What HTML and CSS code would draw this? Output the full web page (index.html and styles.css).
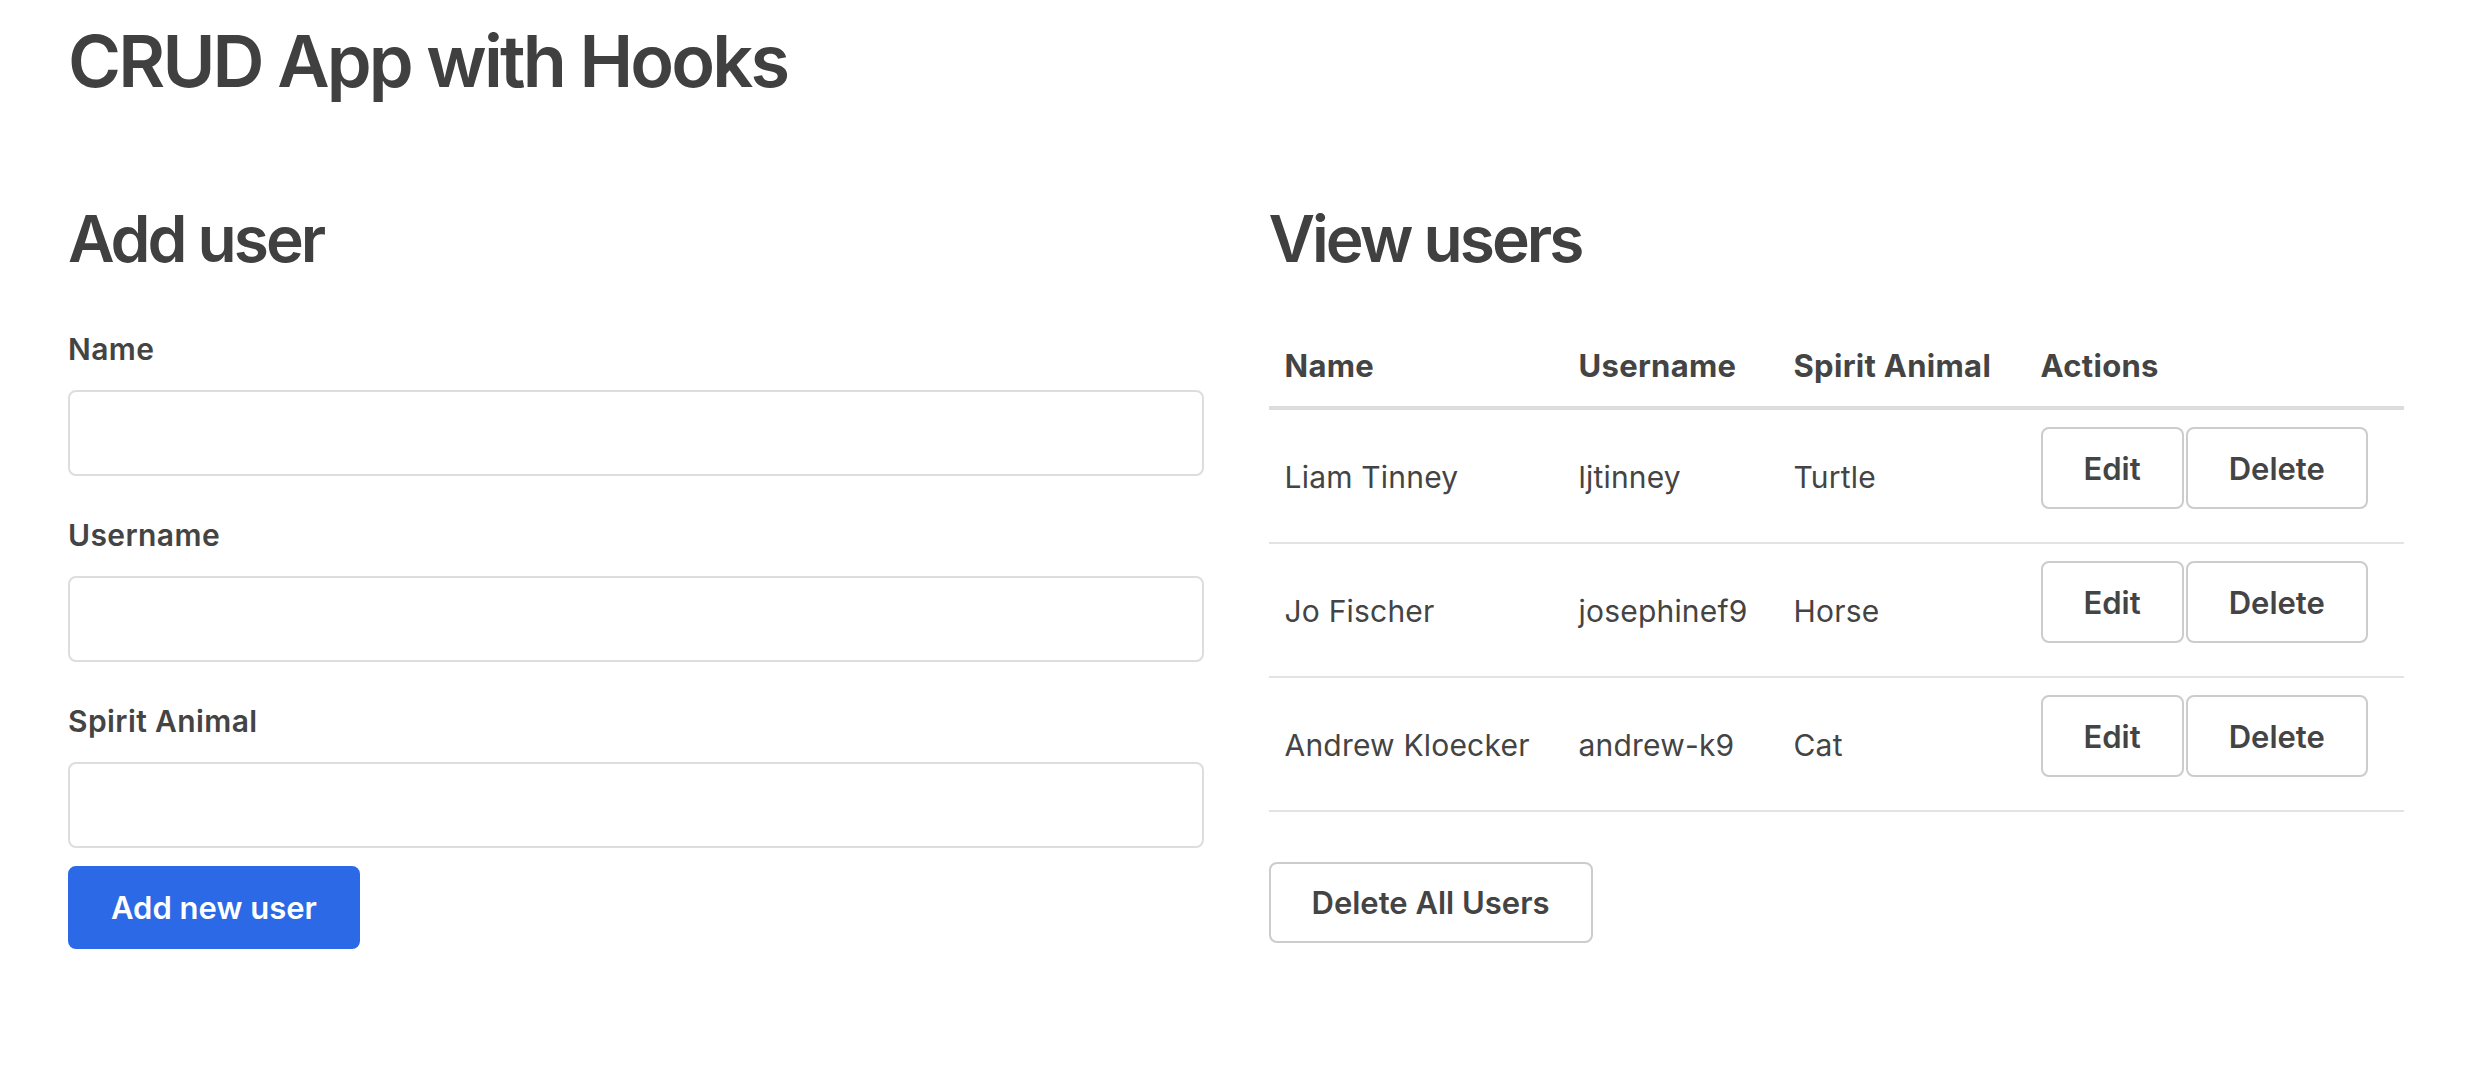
FILE: index.html
```html
<!DOCTYPE html>
<html lang="en">
<head>
<meta charset="utf-8">
<title>CRUD App with Hooks</title>
<link rel="stylesheet" href="styles.css">
</head>
<body>
<div class="page">
  <h1 class="title">CRUD App with Hooks</h1>
  <div class="columns">
    <section class="col">
      <h2 class="heading">Add user</h2>
      <form class="form">
        <label class="label">Name</label>
        <input class="input" type="text" name="name">
        <label class="label">Username</label>
        <input class="input" type="text" name="username">
        <label class="label">Spirit Animal</label>
        <input class="input input-last" type="text" name="animal">
        <button class="btn btn-primary" type="button">Add new user</button>
      </form>
    </section>
    <section class="col">
      <h2 class="heading">View users</h2>
      <table class="table">
        <thead>
          <tr>
            <th class="c-name">Name</th>
            <th class="c-user">Username</th>
            <th class="c-animal">Spirit Animal</th>
            <th class="c-actions">Actions</th>
          </tr>
        </thead>
        <tbody>
          <tr>
            <td>Liam Tinney</td>
            <td>ljtinney</td>
            <td>Turtle</td>
            <td class="actions"><button class="btn btn-small" type="button">Edit</button><button class="btn btn-small btn-next" type="button">Delete</button></td>
          </tr>
          <tr>
            <td>Jo Fischer</td>
            <td>josephinef9</td>
            <td>Horse</td>
            <td class="actions"><button class="btn btn-small" type="button">Edit</button><button class="btn btn-small btn-next" type="button">Delete</button></td>
          </tr>
          <tr>
            <td>Andrew Kloecker</td>
            <td>andrew-k9</td>
            <td>Cat</td>
            <td class="actions"><button class="btn btn-small" type="button">Edit</button><button class="btn btn-small btn-next" type="button">Delete</button></td>
          </tr>
        </tbody>
      </table>
      <button class="btn btn-outline" type="button">Delete All Users</button>
    </section>
  </div>
</div>
</body>
</html>
```
FILE: styles.css
```css
* {
  box-sizing: border-box;
}

body {
  margin: 0;
  background: #ffffff;
  color: #444444;
  font-family: Inter, "Noto Sans", "Liberation Sans", sans-serif;
}

.page {
  width: 2404px;
  padding: 17px 0 0 68px;
}

.title {
  margin: 0;
  font-size: 72px;
  line-height: 88px;
  font-weight: 600;
  color: #404040;
  letter-spacing: -2.8px;
}

.columns {
  display: grid;
  grid-template-columns: 1fr 1fr;
  column-gap: 65px;
  margin-top: 94px;
}

.col {
  min-width: 0;
}

.heading {
  margin: 0;
  font-size: 64px;
  line-height: 80px;
  font-weight: 600;
  color: #404040;
  letter-spacing: -3px;
}

.form {
  margin-top: 48px;
  display: flex;
  flex-direction: column;
  align-items: flex-start;
}

.label {
  font-size: 30px;
  line-height: 44px;
  font-weight: 600;
  letter-spacing: 0.4px;
  margin-bottom: 19px;
}

.input {
  display: block;
  width: 100%;
  height: 86px;
  margin: 0 0 37px;
  padding: 0 20px;
  border: 2px solid #dddddd;
  border-radius: 8px;
  background: #ffffff;
  font-family: inherit;
  font-size: 30px;
  color: #444444;
}

.input-last {
  margin-bottom: 18px;
}

.btn {
  display: inline-block;
  height: 82px;
  padding: 0 41px;
  border: 2px solid #cccccc;
  border-radius: 8px;
  background: #ffffff;
  color: #444444;
  font-family: inherit;
  font-size: 31px;
  font-weight: 600;
  line-height: 1;
  cursor: pointer;
}

.btn-primary {
  height: 83px;
  padding: 0 41px;
  background: #2b69e6;
  border-color: #2b69e6;
  color: #ffffff;
}

.btn-outline {
  height: 81px;
  margin-top: 50px;
  padding: 0 41px;
}

.table {
  width: 100%;
  margin-top: 51px;
  border-collapse: collapse;
}

.table th {
  text-align: left;
  font-size: 31px;
  line-height: 40px;
  font-weight: 700;
  letter-spacing: 0.3px;
  padding: 16px 16px 20px;
  border-bottom: 4px solid #dddddd;
}

.c-name { width: 294px; }
.c-user { width: 215px; }
.c-animal { width: 247px; }

.table td {
  font-size: 30px;
  line-height: 44px;
  font-weight: 400;
  letter-spacing: 0.2px;
  padding: 17px 16px 16px;
  border-bottom: 2px solid #e3e3e3;
  vertical-align: middle;
  white-space: nowrap;
}

.table td.actions {
  vertical-align: top;
  letter-spacing: 0;
}

.btn-small {
  margin-bottom: 17px;
  vertical-align: top;
}

.btn-next {
  margin-left: 2px;
}
```
